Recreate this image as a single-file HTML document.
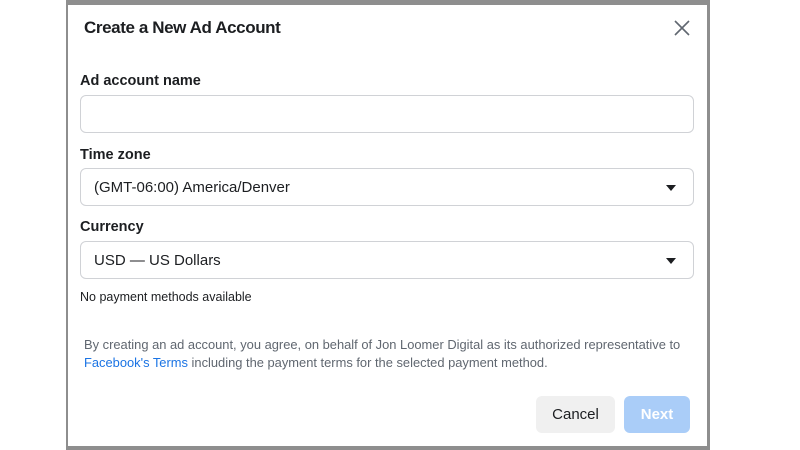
<!DOCTYPE html>
<html><head><style>
body{margin:0;width:800px;height:450px;background:#fff;position:relative;overflow:hidden;font-family:"Liberation Sans",Arial,sans-serif;color:#1c1e21}
.frame{position:absolute;left:66px;top:0;width:644px;height:450px;background:#8e8e8e}
.dlg{position:absolute;left:68px;top:5px;width:639px;height:441px;background:#fff}
.t{position:absolute;left:84px;top:18px;font-size:17px;font-weight:bold;letter-spacing:-0.4px}
.lbl{position:absolute;left:80px;font-size:14.5px;font-weight:bold}
.box{position:absolute;left:80px;width:612px;height:36px;border:1px solid #d0d2d6;border-radius:6px;font-size:15px;line-height:38px;box-sizing:content-box}
.box span{position:absolute;left:13px}
.arr{position:absolute;right:17px;top:16px;width:0;height:0;border-left:5px solid transparent;border-right:5px solid transparent;border-top:6px solid #1c1e21}
.btn{position:absolute;top:396px;height:37px;border-radius:6px;font-size:15px;line-height:38px;text-align:center}
</style></head><body>
<div class="frame"></div>
<div class="dlg"></div>
<div class="t">Create a New Ad Account</div>
<svg style="position:absolute;left:674px;top:20px" width="16" height="16"><path d="M1 1L15 15M15 1L1 15" stroke="#606770" stroke-width="1.6"/></svg>
<div class="lbl" style="top:73px">Ad account name</div>
<div class="box" style="top:95px"></div>
<div class="lbl" style="top:147px">Time zone</div>
<div class="box" style="top:168px"><span>(GMT-06:00) America/Denver</span><div class="arr"></div></div>
<div class="lbl" style="top:219px">Currency</div>
<div class="box" style="top:241px"><span>USD — US Dollars</span><div class="arr"></div></div>
<div style="position:absolute;left:80px;top:290px;font-size:12.5px">No payment methods available</div>
<div style="position:absolute;left:84px;top:336px;font-size:12.9px;line-height:18px;color:#606770;width:620px">By creating an ad account, you agree, on behalf of Jon Loomer Digital as its authorized representative to <span style="color:#1b74e4">Facebook's Terms</span> including the payment terms for the selected payment method.</div>
<div class="btn" style="left:536px;width:79px;background:#f0f0f0;color:#1c1e21">Cancel</div>
<div class="btn" style="left:624px;width:66px;background:#aacdf8;color:#fff;font-weight:bold">Next</div>
</body></html>
